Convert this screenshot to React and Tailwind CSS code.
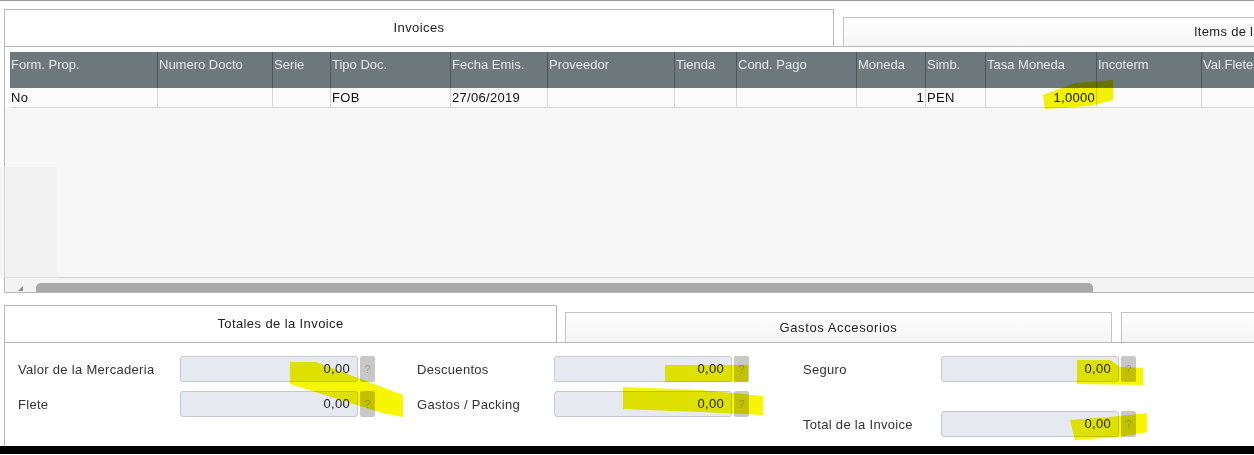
import React from 'react';

const columns = [
  { label: 'Form. Prop.', w: 'w-[148px]', value: 'No' },
  { label: 'Numero Docto', w: 'w-[115px]', value: '' },
  { label: 'Serie', w: 'w-[58px]', value: '' },
  { label: 'Tipo Doc.', w: 'w-[120px]', value: 'FOB' },
  { label: 'Fecha Emis.', w: 'w-[97px]', value: '27/06/2019' },
  { label: 'Proveedor', w: 'w-[127px]', value: '' },
  { label: 'Tienda', w: 'w-[62px]', value: '' },
  { label: 'Cond. Pago', w: 'w-[120px]', value: '' },
  { label: 'Moneda', w: 'w-[69px]', value: '1', right: true },
  { label: 'Simb.', w: 'w-[60px]', value: 'PEN' },
  { label: 'Tasa Moneda', w: 'w-[111px]', value: '1,0000', right: true },
  { label: 'Incoterm', w: 'w-[105px]', value: '' },
  { label: 'Val.Flete', w: 'w-[80px]', value: '' },
];

function Field({ label, labelW, value = '0,00' }) {
  return (
    <div className="flex items-start">
      <div className={`${labelW} shrink-0 pt-[4px] text-[13px] tracking-[0.3px] text-[#333] whitespace-nowrap`}>
        {label}
      </div>
      <div className="w-[178px] h-[26px] flex items-center justify-end pr-[7px] bg-[#e6e9ef] border border-[#c6c9ce] rounded-[3px] text-[13px] tracking-[0.3px] text-[#222]">
        {value}
      </div>
      <div className="ml-[2px] w-[15px] h-[26px] flex items-center justify-center bg-[#c8c8c8] text-[11px] text-[#9c9c9c] rounded-[2px]">
        ?
      </div>
    </div>
  );
}

export default function App() {
  return (
    <div
      className="relative w-[1254px] h-[455px] overflow-hidden bg-white"
      style={{ fontFamily: '"Liberation Sans", Arial, sans-serif' }}
    >
      <div className="h-px bg-[#9e9e9e]" />

      {/* top tabs */}
      <div className="flex items-end pl-[4px] pt-[8px]">
        <div className="w-[830px] shrink-0 h-[37px] flex items-center justify-center bg-white border border-b-0 border-[#b9b9b9] text-[13px] tracking-[0.4px] text-[#222]">
          Invoices
        </div>
        <div className="ml-[9px] w-[816px] shrink-0 h-[29px] flex items-center justify-center bg-gradient-to-b from-white to-[#f5f5f5] border border-b-0 border-[#c4c4c4] text-[13px] tracking-[0.3px] text-[#222]">
          Items de la Invoice
        </div>
      </div>

      {/* invoices grid */}
      <div className="ml-[4px] h-[247px] border-l border-t border-b border-[#b9b9b9] bg-white pt-[5px] pl-[5px] flex flex-col">
        <div className="flex h-[36px] bg-[#6d787c]">
          {columns.map((c) => (
            <div
              key={c.label}
              className={`${c.w} shrink-0 border-r border-[#4d5659] pl-[1px] pt-[3px] text-[13px] text-[#e4e8e9] whitespace-nowrap overflow-hidden`}
            >
              {c.label}
            </div>
          ))}
        </div>
        <div className="flex h-[20px] bg-[#fbfbfb] border-b border-[#d6d6d6]">
          {columns.map((c) => (
            <div
              key={c.label}
              className={`${c.w} shrink-0 border-r border-[#d6d6d6] px-[1px] flex items-center text-[13px] tracking-[0.3px] text-[#111] ${
                c.right ? 'justify-end' : ''
              }`}
            >
              {c.value}
            </div>
          ))}
        </div>
        <div className="flex-1 bg-[#f7f7f7] -ml-[5px]" />
        <div className="h-[15px] -ml-[5px] border-t border-[#d2d2d2] bg-[#f3f3f3] flex items-end">
          <div className="w-[31px] h-[10px] flex items-end justify-center pb-[1px]">
            <div className="w-0 h-0 border-l-[5px] border-l-transparent border-b-[5px] border-b-[#8a8a8a]" />
          </div>
          <div className="w-[1057px] h-[9px] bg-[#a9a9a9] rounded-t-[5px]" />
        </div>
      </div>

      {/* bottom tabs */}
      <div className="flex items-end pl-[4px] mt-[12px]">
        <div className="w-[553px] shrink-0 h-[37px] flex items-center justify-center bg-white border border-b-0 border-[#b9b9b9] text-[13px] tracking-[0.4px] text-[#222]">
          Totales de la Invoice
        </div>
        <div className="ml-[8px] w-[547px] shrink-0 h-[30px] flex items-center justify-center bg-gradient-to-b from-white to-[#f4f4f4] border border-b-0 border-[#c4c4c4] text-[13px] tracking-[0.6px] text-[#222]">
          Gastos Accesorios
        </div>
        <div className="ml-[9px] w-[300px] shrink-0 h-[30px] bg-gradient-to-b from-white to-[#f4f4f4] border border-b-0 border-[#c4c4c4]" />
      </div>

      {/* totals panel */}
      <div className="ml-[4px] h-[104px] border-l border-t border-[#b9b9b9] bg-white pt-[13px] pl-[13px] flex">
        <div className="flex flex-col gap-[9px]">
          <Field label="Valor de la Mercaderia" labelW="w-[162px]" />
          <Field label="Flete" labelW="w-[162px]" />
        </div>
        <div className="ml-[42px] flex flex-col gap-[9px]">
          <Field label="Descuentos" labelW="w-[137px]" />
          <Field label="Gastos / Packing" labelW="w-[137px]" />
        </div>
        <div className="ml-[54px] flex flex-col gap-[29px]">
          <Field label="Seguro" labelW="w-[138px]" />
          <Field label="Total de la Invoice" labelW="w-[138px]" />
        </div>
      </div>

      <div className="h-[8px] bg-black" />

      {/* faded artifact at the left of the grid */}
      <div className="absolute left-0 top-[167px] w-[57px] h-[111px] bg-[#eeeeee]/60 pointer-events-none" />

      {/* yellow marker strokes */}
      <svg className="absolute inset-0 pointer-events-none mix-blend-multiply" width="1254" height="455">
        <g fill="#f6f600">
          <polygon points="1043,95 1075,83 1113,80 1113,100 1090,106 1045,109" />
          <polygon points="290,362 316,362 403,395 403,417 382,413 290,384" />
          <polygon points="665,365 748,365 748,382 665,382" />
          <polygon points="623,387 700,390 763,396 763,415 700,412 623,409" />
          <polygon points="1077,360 1110,360 1120,367 1143,368 1143,385 1077,384" />
          <polygon points="1070,420 1120,416 1147,413 1147,432 1120,437 1075,440" />
        </g>
      </svg>
    </div>
  );
}
